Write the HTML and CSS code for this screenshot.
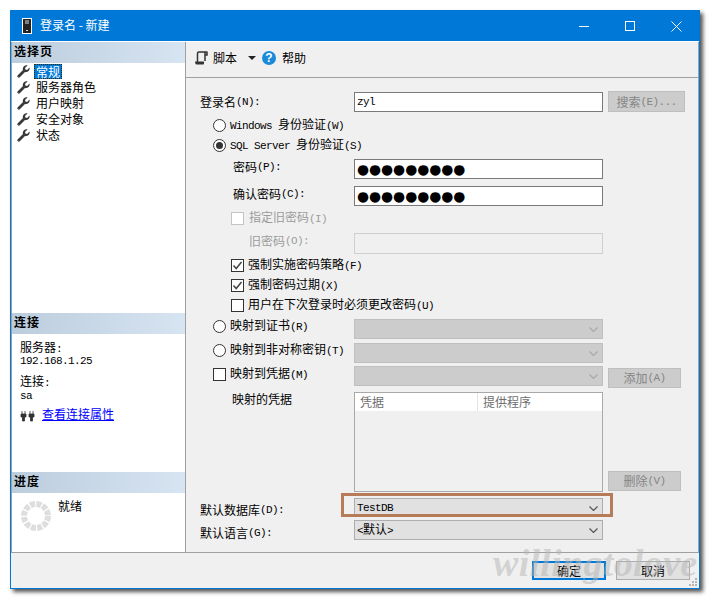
FILE: index.html
```html
<!DOCTYPE html>
<html lang="zh-CN">
<head>
<meta charset="utf-8">
<title>登录名 - 新建</title>
<link rel="stylesheet" href="styles.css">
</head>
<body>
<svg class="defs" width="0" height="0" aria-hidden="true">
  <symbol id="wrench" viewBox="0 0 13 13"><path d="M12.6 2.4 10 5 8.4 4.6 8 3 10.6.4C8.5-.3 6 1 5.8 3.5 5.7 4.2 5.8 4.7 6 5.1L1 10c-.8.8-.8 1.5-.2 2.2.7.6 1.4.6 2.2-.2l5-5c2.5.8 5.3-1.600 4.600-4.600Z" fill="#3a3a3a"/></symbol>
  <symbol id="chev" viewBox="0 0 9 5"><path d="M.5.5 4.500 4.500 8.500.5" fill="none" stroke="currentColor" stroke-width="1.200"/></symbol>
  <symbol id="tick" viewBox="0 0 11 11"><path d="M1.500 5.500 4.200 8.500 9.500 2" fill="none" stroke="#444" stroke-width="1.500"/></symbol>
</svg>

<div class="window">
  <header class="titlebar">
    <svg class="app-icon" width="10" height="16" viewBox="0 0 10 16"><rect x=".5" y=".5" width="9" height="15" fill="#222" stroke="#fff"/><path d="M3 3h4M3 5h4" stroke="#ddd"/><rect x="4" y="12" width="2" height="1" fill="#ddd"/></svg>
    <span class="title">登录名 - 新建</span>
    <div class="controls">
      <span class="ctl"><svg width="10" height="10" viewBox="0 0 10 10"><path d="M0 5.500h10" stroke="#fff"/></svg></span>
      <span class="ctl"><svg width="10" height="10" viewBox="0 0 10 10"><rect x=".5" y=".5" width="9" height="9" fill="none" stroke="#fff"/></svg></span>
      <span class="ctl"><svg width="11" height="11" viewBox="0 0 11 11"><path d="M.5.5l10 10M10.500.5l-10 10" stroke="#fff"/></svg></span>
    </div>
  </header>

  <div class="main">
    <aside class="sidebar">
      <section class="sec sec-pages">
        <h2 class="sec-head">选择页</h2>
        <ul class="pages">
          <li class="page"><svg class="wrench"><use href="#wrench"/></svg><span class="page-sel">常规</span></li>
          <li class="page"><svg class="wrench"><use href="#wrench"/></svg><span class="page-txt">服务器角色</span></li>
          <li class="page"><svg class="wrench"><use href="#wrench"/></svg><span class="page-txt">用户映射</span></li>
          <li class="page"><svg class="wrench"><use href="#wrench"/></svg><span class="page-txt">安全对象</span></li>
          <li class="page"><svg class="wrench"><use href="#wrench"/></svg><span class="page-txt">状态</span></li>
        </ul>
      </section>
      <section class="sec sec-conn">
        <h2 class="sec-head">连接</h2>
        <div class="conn">
          <div class="conn-line">服务器<span class="m">:</span></div>
          <div class="conn-val"><span class="m">192.168.1.25</span></div>
          <div class="conn-line conn-second">连接<span class="m">:</span></div>
          <div class="conn-val conn-val-second"><span class="m">sa</span></div>
          <div class="conn-link">
            <svg class="plug" width="15" height="12" viewBox="0 0 15 12"><path d="M2 1v3M5 1v3M1 4h5v3H4.500v4h-2V7H1zM10 1v3M13 1v3M9 4h5v3h-1.500v4h-2V7H9z" fill="#333" stroke="#333" stroke-width=".8"/></svg>
            <a class="link" href="#">查看连接属性</a>
          </div>
        </div>
      </section>
      <section class="sec sec-prog">
        <h2 class="sec-head">进度</h2>
        <div class="prog">
          <svg width="30" height="30" viewBox="0 0 30 30"><circle cx="15" cy="15" r="12" fill="none" stroke="#dedede" stroke-width="6" stroke-dasharray="5 1.280"/></svg>
          <span class="prog-txt">就绪</span>
        </div>
      </section>
    </aside>

    <div class="content">
      <div class="toolbar">
        <svg class="tb-script" width="14" height="14" viewBox="0 0 14 14"><path d="M3.500 11V2.500C3.500 1.500 4 1 5 1h8.500M13 1v3h-2M11 1.500V10" fill="none" stroke="#333" stroke-width="1.500"/><path d="M1 10.500h9v1.500c0 1-.5 1.500-1 1.500H2.500C1.500 13.500 1 12 1 10.500Z" fill="#333"/></svg>
        <span class="tb-txt">脚本</span>
        <span class="caret"></span>
        <span class="help">?</span>
        <span class="tb-txt">帮助</span>
      </div>

      <form class="form">
        <div class="row h21">
          <span class="lab">登录名<span class="m">(N):</span></span>
          <span class="input input-login"><span class="m">zyl</span></span>
          <span class="btn-off">搜索<span class="m">(E)...</span></span>
        </div>
        <div class="row mt3">
          <span class="lab ind13"><i class="radio"></i><span class="gap4"><span class="m">Windows </span>身份验证<span class="m">(W)</span></span></span>
        </div>
        <div class="row">
          <span class="lab ind13"><i class="radio on"></i><span class="gap4"><span class="m">SQL Server </span>身份验证<span class="m">(S)</span></span></span>
        </div>
        <div class="row mt4">
          <span class="lab ind33 up">密码<span class="m">(P):</span></span>
          <span class="input"><span class="dots">●●●●●●●●●</span></span>
        </div>
        <div class="row mt7">
          <span class="lab ind33 up">确认密码<span class="m">(C):</span></span>
          <span class="input"><span class="dots">●●●●●●●●●</span></span>
        </div>
        <div class="row mt2">
          <span class="lab ind31 off"><i class="check check-off"></i><span class="gap5">指定旧密码<span class="m">(I)</span></span></span>
        </div>
        <div class="row h21 mt5">
          <span class="lab ind49 off up">旧密码<span class="m">(O):</span></span>
          <span class="input input-off"></span>
        </div>
        <div class="row mt1 wide">
          <span class="lab ind31"><i class="check"><svg class="tick"><use href="#tick"/></svg></i><span class="gap4">强制实施密码策略<span class="m">(F)</span></span></span>
        </div>
        <div class="row wide">
          <span class="lab ind31"><i class="check"><svg class="tick"><use href="#tick"/></svg></i><span class="gap4">强制密码过期<span class="m">(X)</span></span></span>
        </div>
        <div class="row wide">
          <span class="lab ind31"><i class="check"></i><span class="gap4">用户在下次登录时必须更改密码<span class="m">(U)</span></span></span>
        </div>
        <div class="row mt3">
          <span class="lab ind13 up"><i class="radio"></i><span class="gap4">映射到证书<span class="m">(R)</span></span></span>
          <span class="select select-off"><svg class="chev"><use href="#chev"/></svg></span>
        </div>
        <div class="row mt4">
          <span class="lab ind13 up"><i class="radio"></i><span class="gap4">映射到非对称密钥<span class="m">(T)</span></span></span>
          <span class="select select-off"><svg class="chev"><use href="#chev"/></svg></span>
        </div>
        <div class="row mt4 h21">
          <span class="lab ind13 up6"><i class="check"></i><span class="gap4">映射到凭据<span class="m">(M)</span></span></span>
          <span class="select select-off select-short"><svg class="chev"><use href="#chev"/></svg></span>
          <span class="btn-off btn-short">添加<span class="m">(A)</span></span>
        </div>
        <div class="row h100 mt5">
          <span class="lab ind32 top">映射的凭据</span>
          <div class="cred">
            <div class="cred-head"><span class="cred-a">凭据</span><span class="cred-b">提供程序</span></div>
          </div>
          <span class="btn-off btn-short btn-end">删除<span class="m">(V)</span></span>
        </div>
        <div class="row h19 mt5 marked">
          <span class="lab dn">默认数据库<span class="m">(D):</span></span>
          <span class="select"><span class="sel-val"><span class="m">TestDB</span></span><svg class="chev"><use href="#chev"/></svg></span>
          <span class="frame"></span>
        </div>
        <div class="row mt4">
          <span class="lab dn">默认语言<span class="m">(G):</span></span>
          <span class="select"><span class="sel-val"><span class="m">&lt;</span>默认<span class="m">&gt;</span></span><svg class="chev"><use href="#chev"/></svg></span>
        </div>
      </form>
    </div>
  </div>

  <footer class="footer">
    <span class="btn btn-main">确定</span>
    <span class="btn">取消</span>
  </footer>
  <svg class="grip" width="9" height="9" viewBox="0 0 9 9"><path d="M6 0h2v2H6zM3 3h2v2H3zM6 3h2v2H6zM0 6h2v2H0zM3 6h2v2H3zM6 6h2v2H6z" fill="#b5b5b5"/></svg>
  <span class="watermark">willingtolove</span>
</div>
</body>
</html>
```
FILE: styles.css
```css
* { box-sizing: border-box; }
html, body { margin: 0; padding: 0; background: #fff; }
body {
  font-family: "Noto Sans CJK SC", "Liberation Sans", sans-serif;
  font-size: 12px;
  line-height: 14px;
  color: #000;
  height: 600px;
  overflow: hidden;
}
.defs { position: absolute; }
.m {
  font-family: "Liberation Mono", "Noto Sans CJK SC", monospace;
  font-size: 11px;
  letter-spacing: -0.6px;
  white-space: pre;
}

.window {
  position: relative;
  margin: 10px 0 0 10px;
  width: 690px;
  height: 579px;
  border: 1px solid #0078d7;
  background: #f0f0f0;
  display: flex;
  flex-direction: column;
  box-shadow: 3px 3px 4px #555;
}

/* title bar */
.titlebar {
  height: 31px;
  flex: none;
  background: #0078d7;
  border-bottom: 1px solid #fff;
  color: #fff;
  display: flex;
  align-items: center;
  padding-left: 11px;
}
.app-icon { flex: none; margin-top: -1px; }
.title { margin-left: 8px; margin-top: -2px; }
.controls { margin-left: auto; display: flex; }
.ctl { width: 46px; height: 30px; display: flex; align-items: center; justify-content: center; }

/* main split */
.main { flex: 1; display: flex; min-height: 0; }

.sidebar {
  width: 175px;
  flex: none;
  background: #fff;
  border-left: 1px solid #a0a0a0;
  border-right: 1px solid #a0a0a0;
  display: flex;
  flex-direction: column;
}
.sec-pages { height: 271px; }
.sec-conn { height: 159px; }
.sec-prog { flex: 1; }
.sec-head {
  margin: 0;
  height: 21px;
  padding-left: 2px;
  font-size: 12px;
  line-height: 18px;
  font-weight: 700;
  letter-spacing: 1px;
  background: linear-gradient(to right, #bccddd, #d7e4f2);
}
.pages { list-style: none; margin: 0; padding: 0; }
.page { height: 16px; display: flex; align-items: center; padding-left: 5px; }
.wrench { width: 13px; height: 13px; flex: none; }
.page-txt { margin-left: 6px; }
.page-sel {
  margin-left: 4px;
  padding: 0 1px;
  height: 15px;
  line-height: 13px;
  background: #0078d7;
  color: #fff;
  border: 1px dotted #3a2a10;
}

.conn { padding: 7px 0 0 8px; }
.conn-line { height: 12px; line-height: 12px; }
.conn-val { height: 12px; line-height: 12px; }
.conn-second { margin-top: 10px; }
.conn-val-second { margin-top: 1px; }
.conn-link { margin-top: 7px; display: flex; align-items: flex-start; gap: 7px; }
.plug { flex: none; margin-top: 3px; }
.link { color: #0000ff; text-decoration: underline; }

.prog { display: flex; padding: 8px 0 0 9px; }
.prog-txt { margin-left: 7px; margin-top: -2px; }

/* right side */
.content {
  flex: 1;
  min-width: 0;
  display: flex;
  flex-direction: column;
  border-right: 1px solid #a0a0a0;
}
.toolbar {
  height: 36px;
  flex: none;
  border-bottom: 1px solid #a0a0a0;
  display: flex;
  align-items: center;
  padding: 0 0 3px 8px;
}
.tb-script { flex: none; }
.tb-txt { margin-left: 5px; }
.caret {
  margin-left: 11px;
  width: 0;
  height: 0;
  border-left: 4px solid transparent;
  border-right: 4px solid transparent;
  border-top: 4px solid #222;
}
.help {
  margin-left: 6px;
  width: 14px;
  height: 14px;
  border-radius: 50%;
  background: #1a8ad9;
  color: #fff;
  font: 700 12px/14px "Liberation Sans", sans-serif;
  text-align: center;
}
.help + .tb-txt { margin-left: 6px; }

.form { padding: 13px 0 0 14px; display: flex; flex-direction: column; }
.row {
  height: 20px;
  flex: none;
  display: grid;
  grid-template-columns: 154px 249px auto;
  align-items: center;
}
.wide { grid-template-columns: 1fr; }
.h19 { height: 19px; }
.h21 { height: 21px; }
.h100 { height: 100px; }
.mt1 { margin-top: 1px; }
.mt2 { margin-top: 2px; }
.mt3 { margin-top: 3px; }
.mt4 { margin-top: 4px; }
.mt5 { margin-top: 5px; }
.mt7 { margin-top: 7px; }

.lab { display: flex; align-items: center; white-space: nowrap; height: 100%; }
.ind13 { padding-left: 13px; }
.ind31 { padding-left: 31px; }
.ind32 { padding-left: 32px; }
.ind33 { padding-left: 33px; }
.ind49 { padding-left: 49px; }
.up { padding-bottom: 5px; }
.up6 { padding-bottom: 6px; }
.dn { padding-top: 6px; }
.top { align-items: flex-start; margin-top: -1px; }
.off { color: #9c9c9c; }
.gap4 { margin-left: 4px; }
.gap5 { margin-left: 5px; }

.radio {
  width: 13px;
  height: 13px;
  flex: none;
  border: 1px solid #333;
  border-radius: 50%;
  background: #fff;
  display: flex;
  align-items: center;
  justify-content: center;
}
.radio.on::after {
  content: "";
  width: 7px;
  height: 7px;
  border-radius: 50%;
  background: #333;
}
.check {
  width: 13px;
  height: 13px;
  flex: none;
  border: 1px solid #333;
  background: #fff;
  display: flex;
}
.check-off { border-color: #c4c4c4; }
.tick { width: 11px; height: 11px; }

.input {
  height: 20px;
  background: #fff;
  border: 1px solid #7a7a7a;
  padding-left: 2px;
  line-height: 17px;
  display: flex;
  align-items: center;
  overflow: hidden;
}
.input-off { height: 21px; background: #f0f0f0; border-color: #cfcfcf; }
.input-login { align-self: end; }
.dots {
  font-family: "DejaVu Sans", sans-serif;
  font-size: 13.8px;
  line-height: 16px;
}

.btn-off {
  margin-left: 5px;
  width: 77px;
  height: 21px;
  background: #ccc;
  border: 1px solid #bfbfbf;
  color: #858585;
  display: flex;
  align-items: center;
  justify-content: center;
}
.btn-short { width: 73px; height: 20px; align-self: end; }
.btn-end { align-self: end; margin-bottom: 1px; }

.select {
  position: relative;
  height: 20px;
  background: #e1e1e1;
  border: 1px solid #adadad;
  display: flex;
  align-items: center;
  padding-left: 2px;
  color: #000;
}
.select-off { background: #ccc; border-color: #bfbfbf; color: #a8a8a8; }
.select-short { align-self: start; }
.sel-val { margin-top: -1px; }
.chev { width: 9px; height: 5px; position: absolute; right: 4px; top: 7px; color: #555; }
.select-off .chev { color: #a8a8a8; }
.marked { position: relative; }
.marked .select { height: 19px; }
.frame {
  position: absolute;
  left: 141px;
  top: -4px;
  width: 272px;
  height: 24px;
  border: 3px solid #b87b5a;
}

.cred {
  height: 100px;
  border: 1px solid #a9a9a9;
  background: #f0f0f0;
}
.cred-head {
  height: 18px;
  background: #fff;
  color: #6d6d6d;
  display: flex;
  align-items: center;
}
.cred-a { width: 123px; padding-left: 5px; border-right: 1px solid #e3e3e3; height: 100%; line-height: 18px; }
.cred-b { padding-left: 5px; line-height: 18px; }

/* footer */
.footer {
  height: 36px;
  flex: none;
  border-top: 1px solid #a0a0a0;
  display: flex;
  justify-content: flex-end;
  align-items: flex-start;
  gap: 10px;
  padding: 8px 9px 0 0;
}
.btn {
  width: 74px;
  height: 19px;
  background: #e1e1e1;
  border: 1px solid #adadad;
  display: flex;
  align-items: center;
  justify-content: center;
}
.btn-main { border: 2px solid #0078d7; }
.grip { position: absolute; right: 1px; bottom: 1px; }
.watermark {
  position: absolute;
  left: 482px;
  top: 530px;
  font: italic 700 38px/44px "Liberation Serif", serif;
  letter-spacing: 0.3px;
  color: rgba(180, 180, 180, 0.5);
  white-space: nowrap;
}
```
